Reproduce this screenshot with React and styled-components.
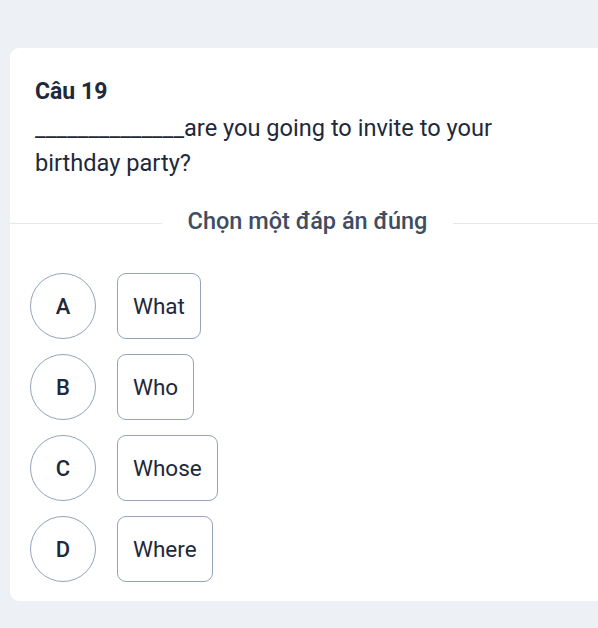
import React from "react";
import styled, { createGlobalStyle } from "styled-components";

const Global = createGlobalStyle`
  html, body { margin: 0; padding: 0; background: #edf0f4; overflow: hidden; }
  body { font-family: Roboto, "Noto Sans", Arial, sans-serif; }
  #root { width: 598px; height: 628px; overflow: hidden; }
`;

const Page = styled.div`
  padding: 48px 0 0 10px;
  width: 598px;
  height: 628px;
  box-sizing: border-box;
`;

const Card = styled.section`
  width: 595px;
  background: #ffffff;
  border-radius: 9px;
  padding: 29px 25px 19px;
  box-sizing: border-box;
  color: #1e293b;
`;

const Title = styled.h2`
  margin: 0;
  font-size: 23px;
  line-height: 30px;
  font-weight: 700;
  color: #1e293b;
`;

const Question = styled.p`
  margin: 4px 0 0;
  font-size: 23.6px;
  line-height: 35px;
  font-weight: 400;
  color: #1e293b;
  max-width: 530px;
`;

const Divider = styled.div`
  display: flex;
  align-items: center;
  gap: 26px;
  margin: 25px -25px 0;
`;

const Rule = styled.span`
  flex: 1;
  height: 1px;
  margin-top: 4px;
  background: #e0e7f0;
`;

const DividerLabel = styled.span`
  font-size: 23.5px;
  line-height: 30px;
  font-weight: 500;
  color: #3f4d61;
  white-space: nowrap;
`;

const Options = styled.ul`
  list-style: none;
  margin: 37px 0 0 -5px;
  padding: 0;
  display: flex;
  flex-direction: column;
  gap: 15px;
`;

const Option = styled.li`
  display: flex;
  align-items: center;
  gap: 21px;
`;

const Letter = styled.span`
  width: 66px;
  height: 66px;
  box-sizing: border-box;
  border-radius: 50%;
  border: 1.5px solid #93a3ba;
  display: flex;
  align-items: center;
  justify-content: center;
  font-size: 22px;
  font-weight: 500;
  color: #1e293b;
`;

const Answer = styled.span`
  height: 66px;
  box-sizing: border-box;
  padding: 0 15px;
  border: 1.5px solid #93a3ba;
  border-radius: 9px;
  display: flex;
  align-items: center;
  font-size: 22.5px;
  font-weight: 400;
  color: #1e293b;
`;

const options = [
  ["A", "What"],
  ["B", "Who"],
  ["C", "Whose"],
  ["D", "Where"],
];

export default function App() {
  return (
    <Page>
      <Global />
      <Card>
        <Title>Câu 19</Title>
        <Question>
          ______________are you going to invite to your birthday party?
        </Question>
        <Divider>
          <Rule />
          <DividerLabel>Chọn một đáp án đúng</DividerLabel>
          <Rule />
        </Divider>
        <Options>
          {options.map(([k, v]) => (
            <Option key={k}>
              <Letter>{k}</Letter>
              <Answer>{v}</Answer>
            </Option>
          ))}
        </Options>
      </Card>
    </Page>
  );
}
